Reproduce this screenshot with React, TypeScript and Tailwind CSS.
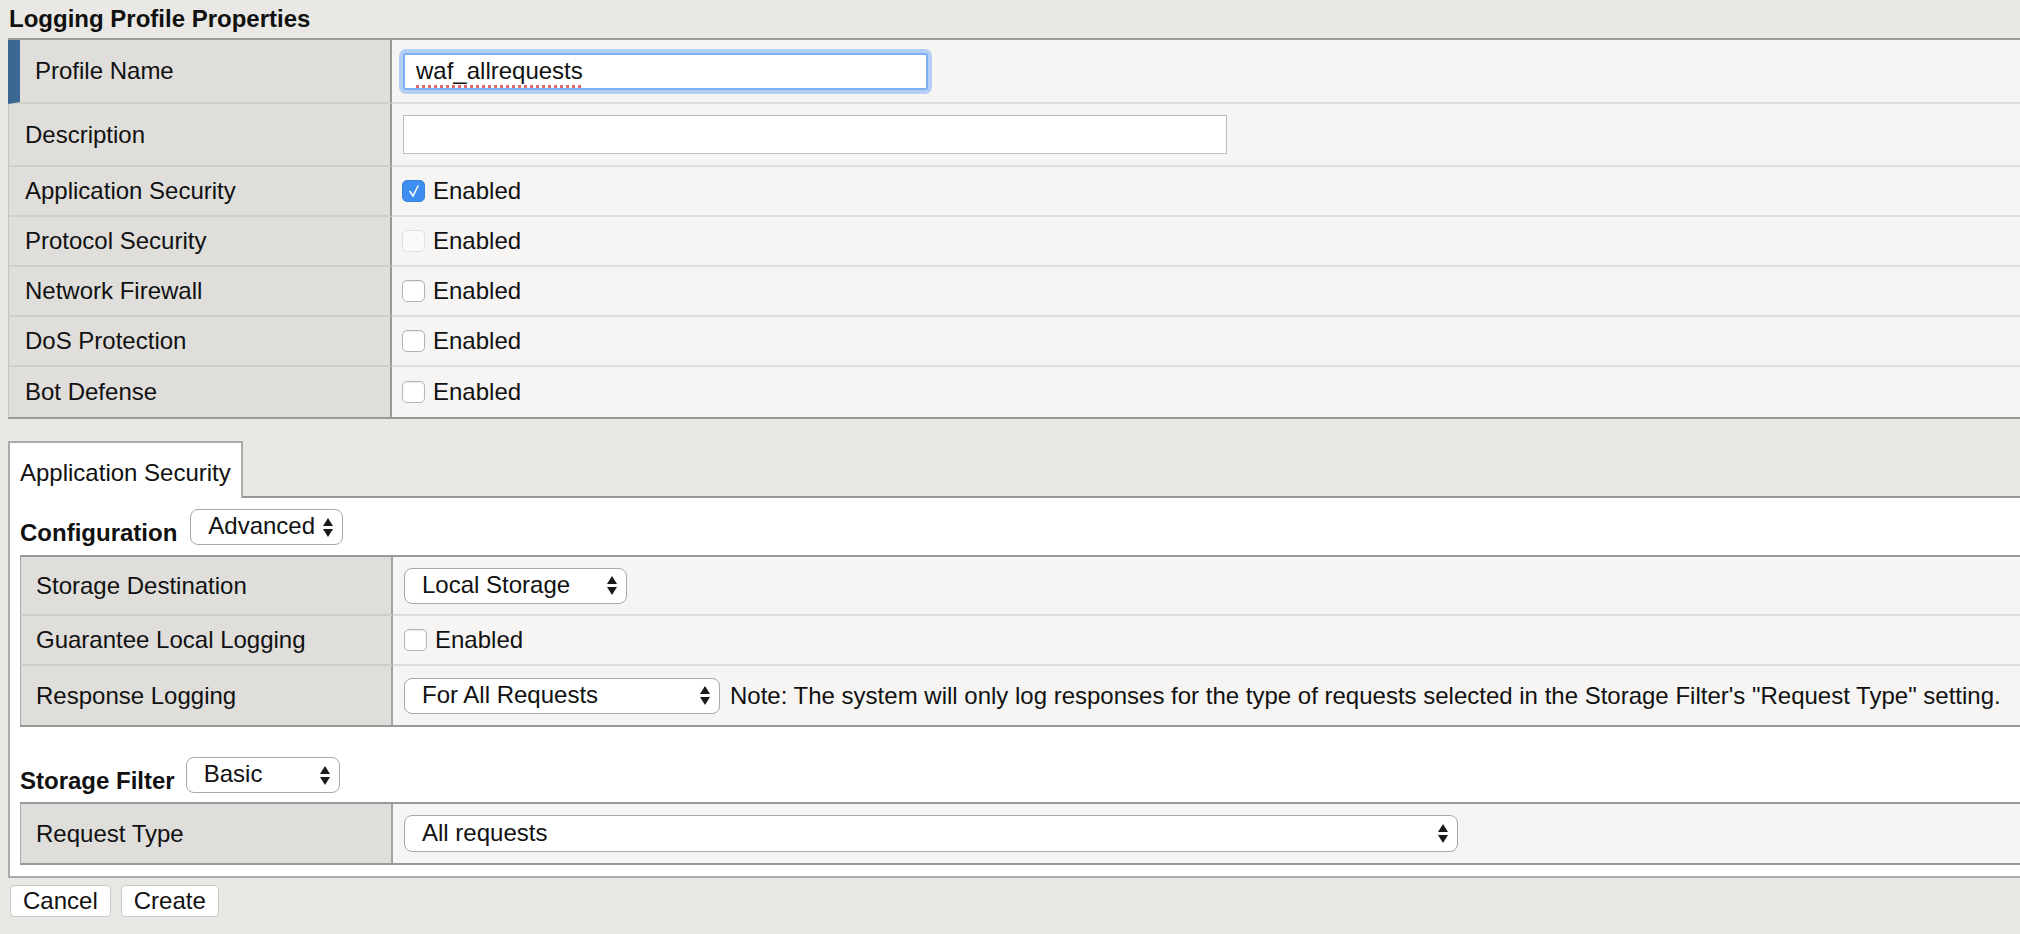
import React from "react";

function Arrows() {
  return (
    <svg width="10" height="19" viewBox="0 0 10 19" className="shrink-0">
      <polygon points="0,8 5,0 10,8" fill="#1a1a1a" />
      <polygon points="0,11 10,11 5,19" fill="#1a1a1a" />
    </svg>
  );
}

function Select({ value, className }: { value: string; className: string }) {
  return (
    <div
      className={`flex items-center justify-between bg-white border border-[#a8a8a8] rounded-[8px] pl-[17px] pr-[9px] ${className}`}
    >
      <span className="pb-[2px] whitespace-nowrap">{value}</span>
      <Arrows />
    </div>
  );
}

function Checkbox({ checked, disabled }: { checked?: boolean; disabled?: boolean }) {
  if (checked) {
    return (
      <span className="w-[23px] h-[22px] rounded-[5px] bg-[#3d8ef0] border border-[#3a83dc] flex items-center justify-center shrink-0">
        <svg width="18" height="18" viewBox="0 0 18 18">
          <path d="M5 9.5 L8 14 L13 4" stroke="white" strokeWidth="1.6" fill="none" strokeLinecap="round" />
        </svg>
      </span>
    );
  }
  return (
    <span
      className={`w-[23px] h-[22px] rounded-[5px] shrink-0 border ${
        disabled ? "border-[#e0e0e0] bg-[#fafafa]" : "border-[#b3b3b3] bg-white shadow-[inset_0_1px_1px_rgba(0,0,0,0.08)]"
      }`}
    />
  );
}

function Enabled({ checked, disabled }: { checked?: boolean; disabled?: boolean }) {
  return (
    <div className="flex items-center gap-[8px]">
      <Checkbox checked={checked} disabled={disabled} />
      <span>Enabled</span>
    </div>
  );
}

// label / value row of the top properties table
function TopRow({
  label,
  h,
  last,
  accent,
  children,
}: {
  label: string;
  h: string;
  last?: boolean;
  accent?: boolean;
  children: React.ReactNode;
}) {
  return (
    <div className={`flex ${h}`}>
      <div
        className={`w-[384px] shrink-0 flex items-center bg-[#dfdedb] border-r-2 border-r-[#999] ${
          accent ? "border-l-[12px] border-l-[#3d6793] pl-[15px]" : "border-l border-l-[#c4c3c0] pl-[16px]"
        } ${last ? "" : "border-b-2 border-b-[#cfcecb]"}`}
      >
        {label}
      </div>
      <div
        className={`flex-1 flex items-center bg-[#f6f5f3] pl-[10px] ${last ? "" : "border-b-2 border-b-[#dedddb]"}`}
      >
        {children}
      </div>
    </div>
  );
}

function SubRow({
  label,
  h,
  last,
  children,
}: {
  label: string;
  h: string;
  last?: boolean;
  children: React.ReactNode;
}) {
  return (
    <div className={`flex ${h}`}>
      <div
        className={`w-[373px] shrink-0 flex items-center bg-[#dfdedb] border-r-2 border-r-[#a3a3a3] border-l border-l-[#aaa] pl-[15px] ${
          last ? "" : "border-b-2 border-b-[#cfcecb]"
        }`}
      >
        {label}
      </div>
      <div
        className={`flex-1 flex items-center bg-[#f6f5f3] pl-[11px] ${last ? "" : "border-b-2 border-b-[#dedddb]"}`}
      >
        {children}
      </div>
    </div>
  );
}

export default function App() {
  return (
    <div className="min-h-[934px] bg-[#e9e8e4] font-['Liberation_Sans',Arial,sans-serif] text-[24px] text-[#111] overflow-hidden">
      {/* Title */}
      <div className="h-[38px] pl-[9px] flex items-center font-bold text-[24px]">Logging Profile Properties</div>

      {/* Properties table */}
      <div className="ml-[8px] border-t-2 border-b-2 border-[#999]">
        <TopRow label="Profile Name" h="h-[64px]" accent>
          <div className="pl-[1px]">
            <div className="w-[525px] h-[37px] bg-white border-2 border-[#7eaef2] shadow-[0_0_0_4px_#b3cff5] rounded-[3px] flex items-center pl-[11px]">
              <span className="underline decoration-dotted decoration-[#e46a6a] decoration-[3px] underline-offset-[6px]">
                waf_allrequests
              </span>
            </div>
          </div>
        </TopRow>
        <TopRow label="Description" h="h-[63px]">
          <div className="pl-[1px]">
            <div className="w-[824px] h-[39px] bg-white border border-[#bdbdbd]" />
          </div>
        </TopRow>
        <TopRow label="Application Security" h="h-[50px]">
          <Enabled checked />
        </TopRow>
        <TopRow label="Protocol Security" h="h-[50px]">
          <Enabled disabled />
        </TopRow>
        <TopRow label="Network Firewall" h="h-[50px]">
          <Enabled />
        </TopRow>
        <TopRow label="DoS Protection" h="h-[50px]">
          <Enabled />
        </TopRow>
        <TopRow label="Bot Defense" h="h-[50px]" last>
          <Enabled />
        </TopRow>
      </div>

      {/* Tabs */}
      <div className="flex items-end mt-[22px]">
        <div className="ml-[8px] w-[235px] h-[57px] border-t-2 border-x-2 border-[#aaa] bg-white flex items-center pl-[10px] pt-[4px]">
          Application Security
        </div>
        <div className="flex-1 border-b-2 border-[#999]" />
      </div>

      {/* Tab panel */}
      <div className="ml-[8px] bg-white border-l-2 border-b-2 border-[#aaa] pt-[11px] pb-[11px] pl-[10px]">
        <div className="flex items-end">
          <span className="font-bold text-[24px] leading-[24px]">Configuration</span>
          <Select value="Advanced" className="ml-[13px] w-[153px] h-[36px]" />
        </div>

        <div className="mt-[10px] border-t-2 border-b-2 border-[#999]">
          <SubRow label="Storage Destination" h="h-[59px]">
            <Select value="Local Storage" className="w-[223px] h-[36px]" />
          </SubRow>
          <SubRow label="Guarantee Local Logging" h="h-[50px]">
            <Enabled />
          </SubRow>
          <SubRow label="Response Logging" h="h-[59px]" last>
            <Select value="For All Requests" className="w-[316px] h-[36px]" />
            <span className="ml-[10px] whitespace-nowrap">
              Note: The system will only log responses for the type of requests selected in the Storage Filter's
              "Request Type" setting.
            </span>
          </SubRow>
        </div>

        <div className="flex items-end mt-[30px]">
          <span className="font-bold text-[24px] leading-[24px]">Storage Filter</span>
          <Select value="Basic" className="ml-[11px] w-[154px] h-[36px]" />
        </div>

        <div className="mt-[9px] border-t-2 border-b-2 border-[#999]">
          <SubRow label="Request Type" h="h-[59px]" last>
            <Select value="All requests" className="w-[1054px] h-[37px]" />
          </SubRow>
        </div>
      </div>

      {/* Buttons */}
      <div className="flex gap-[10px] ml-[10px] mt-[7px]">
        <button className="h-[32px] px-[12px] bg-white border border-[#c9c9c9] rounded-[4px] text-[24px] leading-none">
          Cancel
        </button>
        <button className="h-[32px] px-[12px] bg-white border border-[#c9c9c9] rounded-[4px] text-[24px] leading-none">
          Create
        </button>
      </div>
    </div>
  );
}
